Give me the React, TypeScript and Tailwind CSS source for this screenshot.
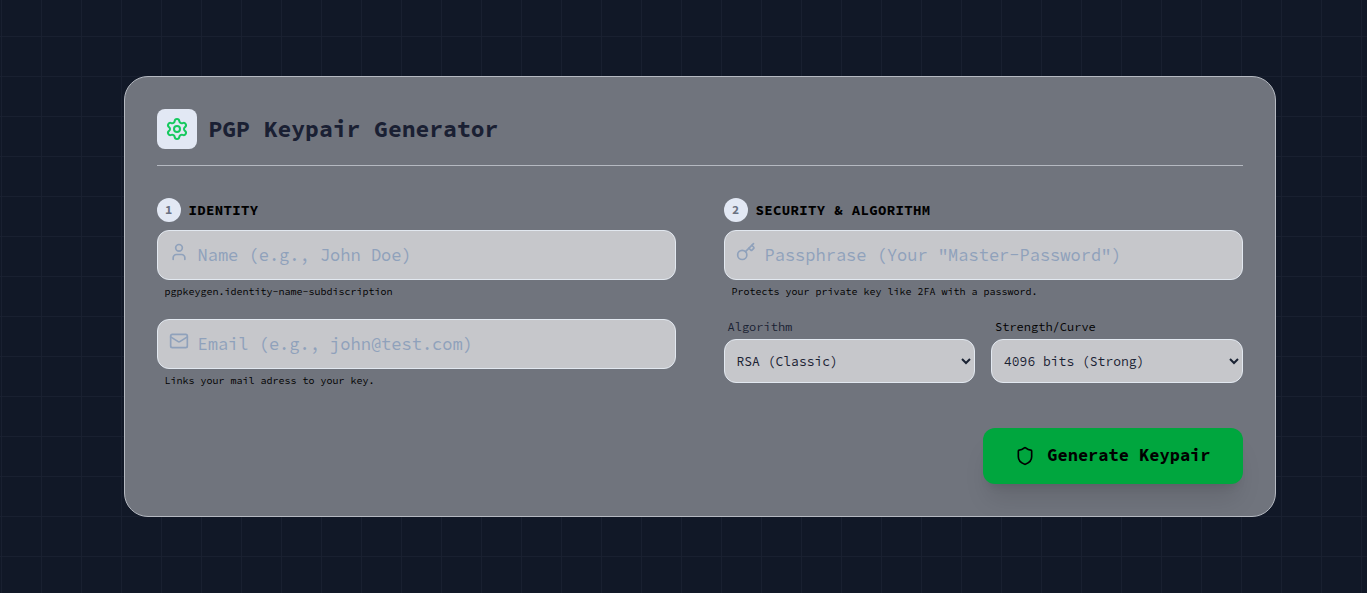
import React from 'react';
import { Key, Mail, Settings, Shield, User } from 'lucide-react';

type TextFieldProps = {
  id: string;
  type: string;
  label: string;
  placeholder: string;
  hint: string;
  icon: React.ReactNode;
};

const TextField: React.FC<TextFieldProps> = ({ id, type, label, placeholder, hint, icon }) => (
  <div>
    <div className="relative">
      <label htmlFor={id} aria-label={label} className="absolute left-3 top-3 text-[#8fa1bb]">
        {icon}
      </label>
      <input
        id={id}
        type={type}
        aria-label={label}
        placeholder={placeholder}
        className="block h-[50px] w-full rounded-xl border border-slate-200 bg-[#c6c7cb] pl-10 pr-3 text-[17px] text-slate-900 placeholder:text-[#8fa1bb]"
      />
    </div>
    <p className="mt-1 px-2 text-[10px] leading-[15px] text-black">{hint}</p>
  </div>
);

type SelectFieldProps = {
  id: string;
  label: string;
  labelClass: string;
  options: string[];
};

const SelectField: React.FC<SelectFieldProps> = ({ id, label, labelClass, options }) => (
  <div className="flex flex-col gap-1">
    <label htmlFor={id} className={`px-1 text-xs leading-4 ${labelClass}`}>{label}</label>
    <select id={id} className="h-11 w-full rounded-xl border border-slate-200 bg-[#c6c7cb] px-2 text-[13px] text-[#1a2233]">
      {options.map((option) => (
        <option key={option}>{option}</option>
      ))}
    </select>
  </div>
);

const StepTitle: React.FC<{ step: number; title: string }> = ({ step, title }) => (
  <h2 className="mb-2 flex items-center gap-2 text-sm font-bold uppercase leading-6 tracking-wide text-black">
    <span className="flex size-6 items-center justify-center rounded-full bg-[#e2e8f4] text-xs tracking-normal text-gray-500">
      {step}
    </span>
    {title}
  </h2>
);

const App: React.FC = () => {
  return (
    <main className="flex min-h-screen items-center justify-center bg-[#111827] bg-[linear-gradient(to_right,#192030_1px,transparent_1px),linear-gradient(to_bottom,#192030_1px,transparent_1px)] bg-[size:40px_40px] bg-[position:1px_36px] py-8 pl-8 font-['Source_Code_Pro','Liberation_Mono',monospace]">
      <form className="w-full max-w-6xl rounded-3xl border border-[#b5b9c1] bg-[#70747d] p-8">
        <header className="mb-8 flex items-center gap-3 border-b border-[#b5b9c1] pb-4">
          <span className="flex size-10 items-center justify-center rounded-lg bg-[#e2e8f4]">
            <Settings className="size-6 text-[#16c95e]" />
          </span>
          <h1 className="text-[23px] font-bold leading-8 text-[#1a2033]">PGP Keypair Generator</h1>
        </header>

        <div className="grid gap-12 md:grid-cols-2">
          <section>
            <StepTitle step={1} title="Identity" />
            <div className="space-y-5">
              <TextField
                id="name"
                type="text"
                label="Name"
                placeholder="Name (e.g., John Doe)"
                hint="pgpkeygen.identity-name-subdiscription"
                icon={<User className="size-5" />}
              />
              <TextField
                id="email"
                type="email"
                label="Email"
                placeholder="Email (e.g., john@test.com)"
                hint="Links your mail adress to your key."
                icon={<Mail className="size-5" />}
              />
            </div>
          </section>

          <section>
            <StepTitle step={2} title="Security & Algorithm" />
            <div className="space-y-5">
              <TextField
                id="passphrase"
                type="password"
                label="Passphrase"
                placeholder={'Passphrase (Your "Master-Password")'}
                hint="Protects your private key like 2FA with a password."
                icon={<Key className="size-5" />}
              />
              <div className="grid grid-cols-2 gap-4">
                <SelectField
                  id="algorithm"
                  label="Algorithm"
                  labelClass="text-[#1a2233]"
                  options={['RSA (Classic)', 'ECC (Modern)']}
                />
                <SelectField
                  id="strength"
                  label="Strength/Curve"
                  labelClass="text-black"
                  options={['4096 bits (Strong)', '2048 bits']}
                />
              </div>
            </div>
          </section>
        </div>

        <div className="mt-10 flex justify-end">
          <button
            type="button"
            className="flex h-14 items-center gap-3 rounded-xl bg-[#00a63e] px-8 text-[17px] font-bold text-black shadow-xl"
          >
            <Shield className="size-5" />
            Generate Keypair
          </button>
        </div>
      </form>
    </main>
  );
};

export default App;
